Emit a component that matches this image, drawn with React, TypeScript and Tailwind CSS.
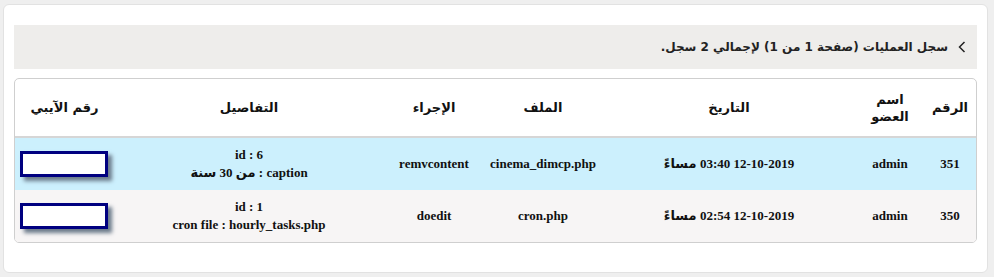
import React from 'react';

type LogRow = {
  id: number;
  member: string;
  date: string;
  file: string;
  action: string;
  details: string[];
};

const rows: LogRow[] = [
  {
    id: 351,
    member: 'admin',
    date: '12-10-2019 03:40 مساءً',
    file: 'cinema_dimcp.php',
    action: 'remvcontent',
    details: ['id : 6', 'caption : من 30 سنة'],
  },
  {
    id: 350,
    member: 'admin',
    date: '12-10-2019 02:54 مساءً',
    file: 'cron.php',
    action: 'doedit',
    details: ['id : 1', 'cron file : hourly_tasks.php'],
  },
];

const sans = "font-['DejaVu_Sans',sans-serif]";
const serif = "font-['Liberation_Serif','DejaVu_Sans',serif]";

export default function App() {
  return (
    <div dir="rtl" className={`min-h-[277px] bg-[#efefef] pt-[4px] pr-[6px] pl-[3px] pb-[4px] ${sans}`}>
      <div className="h-[269px] rounded-[6px] border border-[#e2e2e2] bg-white px-[10px] pt-[20px]">
        <div className="flex h-[44px] items-center gap-[10px] bg-[#eeedeb] pr-[11px] text-[12px] font-bold text-[#222]">
          <svg width="8" height="12" viewBox="0 0 8 12" className="shrink-0">
            <polyline points="6.5,1 1.5,6 6.5,11" fill="none" stroke="#222" strokeWidth="1.5" />
          </svg>
          <span>سجل العمليات (صفحة 1 من 1) لإجمالي 2 سجل.</span>
        </div>

        <div className="mt-[9px] overflow-hidden rounded-[5px] border border-[#cfcfcf]">
          <table className="w-full table-fixed border-collapse text-center">
            <colgroup>
              <col className="w-[52px]" />
              <col className="w-[68px]" />
              <col className="w-[254px]" />
              <col className="w-[118px]" />
              <col className="w-[100px]" />
              <col className="w-[270px]" />
              <col />
            </colgroup>
            <thead>
              <tr className="h-[58px] border-b-2 border-[#d6d6d6] text-[13px] font-bold text-[#111]">
                <th className="px-[6px] leading-[17px]">الرقم</th>
                <th className="px-[6px] leading-[17px]">اسم العضو</th>
                <th className="px-[6px] leading-[17px]">التاريخ</th>
                <th className="px-[6px] leading-[17px]">الملف</th>
                <th className="px-[6px] leading-[17px]">الإجراء</th>
                <th className="px-[6px] leading-[17px]">التفاصيل</th>
                <th className="px-[6px] leading-[17px]">رقم الآيبي</th>
              </tr>
            </thead>
            <tbody className={`${serif} text-[13px] font-bold text-[#111]`}>
              {rows.map((row, i) => (
                <tr key={row.id} className={i === 0 ? 'h-[53px] bg-[#ccf0fd]' : 'h-[52px] bg-[#f7f5f5]'}>
                  <td className="px-[6px]">{row.id}</td>
                  <td className="px-[6px]">{row.member}</td>
                  <td className="px-[6px]">{row.date}</td>
                  <td className="px-[6px]">{row.file}</td>
                  <td className="px-[6px]">{row.action}</td>
                  <td className="px-[6px] leading-[18px]">
                    {row.details.map((line) => (
                      <div key={line}>{line}</div>
                    ))}
                  </td>
                  <td className="px-[6px]">
                    <input
                      type="text"
                      readOnly
                      className="mx-auto block h-[26px] w-[88px] border-[3px] border-[#000080] bg-white shadow-[4px_4px_4px_#6b7a8a] outline-none"
                    />
                  </td>
                </tr>
              ))}
            </tbody>
          </table>
        </div>
      </div>
    </div>
  );
}
